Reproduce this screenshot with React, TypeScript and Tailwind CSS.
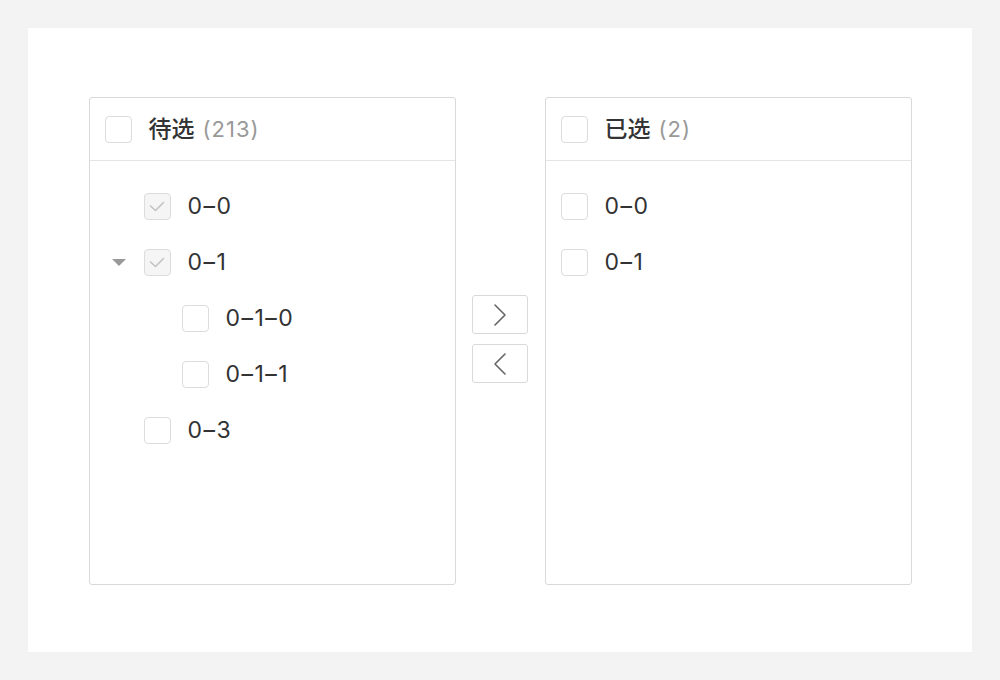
import React from "react";

const font = { fontFamily: 'Inter, "Noto Sans CJK SC", sans-serif' };

function Box({ checked }: { checked?: boolean }) {
  return (
    <span
      className={`flex h-[27px] w-[27px] shrink-0 items-center justify-center rounded-[4px] border-[1.5px] border-[#dcdcdc] ${
        checked ? "bg-[#f5f5f5]" : "bg-white"
      }`}
    >
      {checked && (
        <svg width="16" height="11" viewBox="0 0 16 11" fill="none">
          <path d="M1.5 5l5 4.5 8-8" stroke="#c2c2c2" strokeWidth="1.6" strokeLinecap="round" strokeLinejoin="round" />
        </svg>
      )}
    </span>
  );
}

type Row = { label: string; level: number; checked?: boolean; caret?: boolean };

const left: Row[] = [
  { label: "0–0", level: 0, checked: true },
  { label: "0–1", level: 0, checked: true, caret: true },
  { label: "0–1–0", level: 1 },
  { label: "0–1–1", level: 1 },
  { label: "0–3", level: 0 },
];

function Header({ title, count }: { title: string; count: number }) {
  return (
    <div className="flex h-[63px] items-center border-b border-[#e5e5e5] pl-[15px]">
      <Box />
      <span className="ml-[17px] text-[23px] font-medium text-[#333]">{title}</span>
      <span className="ml-[8px] text-[22px] tracking-[1px] text-[#999]">({count})</span>
    </div>
  );
}

function Item({ label }: { label: string }) {
  return <span className="ml-[17px] text-[23px] tracking-[1.5px] text-[#333]">{label}</span>;
}

export default function App() {
  return (
    <div className="min-h-[680px] bg-[#f3f3f3] p-[28px]" style={font}>
      <div className="flex h-[624px] items-start justify-center bg-white pt-[69px]">
        <div className="flex h-[488px] w-[367px] flex-col rounded-[3px] border border-[#d9d9d9]">
          <Header title="待选" count={213} />
          <div className="pt-[17px]">
            {left.map((r) => (
              <div
                key={r.label}
                className={`flex h-[56px] items-center ${r.level ? "pl-[92px]" : "pl-[54px]"}`}
              >
                {r.caret && (
                  <svg className="-ml-[32px] mr-[18px]" width="14" height="7" viewBox="0 0 14 7">
                    <path d="M0 0h14L7 7z" fill="#999" />
                  </svg>
                )}
                <Box checked={r.checked} />
                <Item label={r.label} />
              </div>
            ))}
          </div>
        </div>

        <div className="flex h-[488px] w-[89px] flex-col items-center justify-center gap-[10px] pb-[4px]">
          <button className="flex h-[39px] w-[56px] items-center justify-center rounded-[3px] border border-[#d9d9d9] bg-white">
            <svg width="14" height="24" viewBox="0 0 14 24" fill="none">
              <path d="M2 2l10 10-10 10" stroke="#666" strokeWidth="1.6" strokeLinecap="round" strokeLinejoin="round" />
            </svg>
          </button>
          <button className="flex h-[39px] w-[56px] items-center justify-center rounded-[3px] border border-[#d9d9d9] bg-white">
            <svg width="14" height="24" viewBox="0 0 14 24" fill="none">
              <path d="M12 2L2 12l10 10" stroke="#666" strokeWidth="1.6" strokeLinecap="round" strokeLinejoin="round" />
            </svg>
          </button>
        </div>

        <div className="flex h-[488px] w-[367px] flex-col rounded-[3px] border border-[#d9d9d9]">
          <Header title="已选" count={2} />
          <div className="pt-[17px]">
            {["0–0", "0–1"].map((l) => (
              <div key={l} className="flex h-[56px] items-center pl-[15px]">
                <Box />
                <Item label={l} />
              </div>
            ))}
          </div>
        </div>
      </div>
    </div>
  );
}
